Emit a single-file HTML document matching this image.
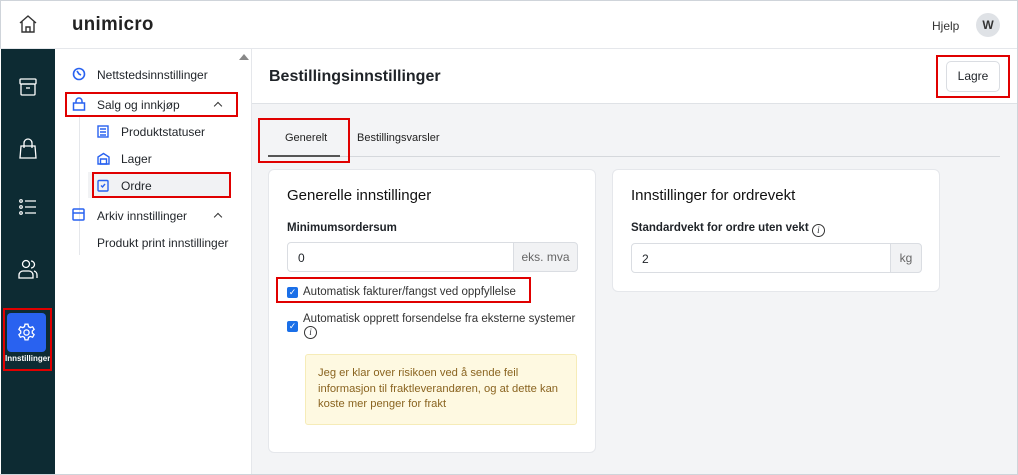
<!DOCTYPE html>
<html><head><meta charset="utf-8"><style>
*{box-sizing:border-box;margin:0;padding:0}
body{width:1018px;height:475px;overflow:hidden;font-family:"Liberation Sans",sans-serif;background:#fff;position:relative;color:#1f2328}
.abs{position:absolute}
.red{position:absolute;border:2px solid #e00000}
.top{left:0;top:0;width:1018px;height:49px;border:1px solid #cfd4da;border-bottom:1px solid #e5e7eb;background:#fff}
.rail{left:1px;top:49px;width:54px;height:425px;background:#0d2b33}
.side{left:55px;top:49px;width:197px;height:425px;background:#fff;border-right:1px solid #e5e7eb}
.main{left:252px;top:49px;width:765px;height:425px;background:#f3f4f6}
.hdr{left:252px;top:49px;width:765px;height:55px;background:#fff;border-bottom:1px solid #dfe2e6}
.si{position:absolute;font-size:12px;color:#1f2328}
.card{position:absolute;background:#fff;border:1px solid #e5e7eb;border-radius:6px}
.h{font-size:15px;color:#111}
.lbl{font-size:11.5px;font-weight:bold}
.inp{position:absolute;height:30px;border:1px solid #dadde2;border-radius:4px;background:#fff;font-size:12px}
.cb{position:absolute;width:11px;height:11px;background:#1a6fe8;border-radius:2px;color:#fff;font-size:9px;line-height:11px;text-align:center}
.chev{position:absolute;width:6px;height:6px;border-left:1.5px solid #333;border-top:1.5px solid #333;transform:rotate(45deg)}
.info{display:inline-block;width:13px;height:13px;border:1px solid #333;border-radius:50%;font-size:9px;text-align:center;line-height:11px;font-style:italic;font-family:'Liberation Serif',serif;font-weight:normal;vertical-align:-2px}
</style></head><body>
<div class="abs top"></div>
<svg class="abs" style="left:18px;top:14px" width="20" height="20" viewBox="0 0 20 20" fill="none" stroke="#333" stroke-width="1.4"><path d="M2 9L10 2l8 7M4 7.5V18h12V7.5M8 18v-5h4v5"/></svg>
<div class="abs" style="left:72px;top:14px;font-size:19px;color:#222;letter-spacing:0.4px;font-weight:bold;transform:scaleX(0.98);transform-origin:left">unimicro</div>
<div class="abs" style="left:932px;top:19px;font-size:12px;color:#333">Hjelp</div>
<div class="abs" style="left:976px;top:13px;width:24px;height:24px;border-radius:50%;background:#dfe2e6;font-size:12px;font-weight:bold;text-align:center;line-height:24px;color:#333">W</div>
<div class="abs rail"></div>
<svg class="abs" style="left:18px;top:77px" width="20" height="20" viewBox="0 0 20 20" fill="none" stroke="#fff" stroke-width="1.3"><rect x="2" y="2" width="16" height="5" rx="1"/><rect x="3" y="7" width="14" height="11" rx="1"/><path d="M8 11h4"/></svg>
<svg class="abs" style="left:18px;top:138px" width="20" height="22" viewBox="0 0 20 22" fill="none" stroke="#fff" stroke-width="1.3"><path d="M3 8h14l1 12H2z"/><path d="M6 10V5a4 4 0 018 0v5"/></svg>
<svg class="abs" style="left:18px;top:197px" width="20" height="20" viewBox="0 0 20 20" fill="none" stroke="#fff" stroke-width="1.2"><circle cx="3" cy="4" r="1.3"/><circle cx="3" cy="10" r="1.3"/><circle cx="3" cy="16" r="1.3"/><path d="M7 4h11M7 10h11M7 16h11"/></svg>
<svg class="abs" style="left:18px;top:259px" width="20" height="20" viewBox="0 0 20 20" fill="none" stroke="#fff" stroke-width="1.3"><circle cx="8" cy="5" r="3.5"/><path d="M1 19v-3a4 4 0 014-4h6a4 4 0 014 4v3zM13 2a3.5 3.5 0 010 7M16 12a4 4 0 013 4v3"/></svg>
<div class="abs" style="left:7px;top:313px;width:39px;height:39px;background:#2962f0;border-radius:4px"></div>
<svg class="abs" style="left:16px;top:322px" width="21" height="21" viewBox="0 0 24 24" fill="none" stroke="#fff" stroke-width="1.5"><circle cx="12" cy="12" r="3"/><path d="M10.3 2.5h3.4l.6 2.8 2 1.1 2.7-.9 1.7 2.9-2.1 1.9v2.3l2.1 1.9-1.7 2.9-2.7-.9-2 1.1-.6 2.8h-3.4l-.6-2.8-2-1.1-2.7.9-1.7-2.9 2.1-1.9v-2.3L3.3 8.4 5 5.5l2.7.9 2-1.1z"/></svg>
<div class="abs" style="left:5px;top:354px;font-size:8px;font-weight:bold;color:#fff">Innstillinger</div>
<div class="red" style="left:3px;top:308px;width:49px;height:63px"></div>
<div class="abs side"></div>
<div class="abs" style="left:239px;top:54px;width:0;height:0;border-left:5px solid transparent;border-right:5px solid transparent;border-bottom:6px solid #888"></div>
<div class="abs" style="left:79px;top:115px;width:1px;height:140px;background:#e5e7eb"></div>
<svg class="abs" style="left:72px;top:67px" width="14" height="14" viewBox="0 0 14 14" fill="none" stroke="#2962f0" stroke-width="1.6"><circle cx="7" cy="7" r="5.5"/><path d="M5 4l2 3 2 1"/></svg>
<div class="si" style="left:97px;top:68px">Nettstedsinnstillinger</div>
<svg class="abs" style="left:72px;top:97px" width="14" height="14" viewBox="0 0 14 14" fill="none" stroke="#2962f0" stroke-width="1.5"><path d="M1.5 6h11v7h-11z"/><path d="M4 6V4a3 3 0 016 0v2"/></svg>
<div class="si" style="left:97px;top:98px">Salg og innkjøp</div>
<div class="chev" style="left:215px;top:103px"></div>
<div class="red" style="left:65px;top:92px;width:173px;height:25px"></div>
<svg class="abs" style="left:97px;top:125px" width="12" height="13" viewBox="0 0 12 13" fill="none" stroke="#2962f0" stroke-width="1.4"><rect x="1" y="1" width="10" height="11"/><path d="M3 4h6M3 7h6M3 10h6"/></svg>
<div class="si" style="left:121px;top:125px">Produktstatuser</div>
<svg class="abs" style="left:97px;top:152px" width="13" height="13" viewBox="0 0 13 13" fill="none" stroke="#2962f0" stroke-width="1.4"><path d="M1 5l5.5-3.5L12 5v7H1z"/><path d="M3.5 7h6v5h-6z"/></svg>
<div class="si" style="left:121px;top:152px">Lager</div>
<div class="abs" style="left:88px;top:172px;width:143px;height:26px;background:#f1f2f4"></div>
<svg class="abs" style="left:97px;top:179px" width="12" height="13" viewBox="0 0 12 13" fill="none" stroke="#2962f0" stroke-width="1.4"><rect x="1" y="1.5" width="10" height="10.5" rx="1"/><path d="M4 6.5l1.5 1.5L8 5"/></svg>
<div class="si" style="left:121px;top:179px">Ordre</div>
<div class="red" style="left:92px;top:172px;width:139px;height:26px"></div>
<svg class="abs" style="left:72px;top:208px" width="13" height="13" viewBox="0 0 13 13" fill="none" stroke="#2962f0" stroke-width="1.5"><rect x="1" y="1" width="11" height="11" rx="1"/><path d="M1 5h11"/></svg>
<div class="si" style="left:97px;top:209px">Arkiv innstillinger</div>
<div class="chev" style="left:215px;top:214px"></div>
<div class="si" style="left:97px;top:236px">Produkt print innstillinger</div>
<div class="abs main"></div>
<div class="abs hdr"></div>
<div class="abs" style="left:269px;top:68px;font-size:16px;font-weight:bold;color:#1f2328">Bestillingsinnstillinger</div>
<div class="abs" style="left:946px;top:61px;width:54px;height:31px;border:1px solid #dadde2;border-radius:5px;background:#fff;font-size:12px;text-align:center;line-height:29px">Lagre</div>
<div class="red" style="left:936px;top:55px;width:74px;height:43px"></div>
<div class="abs" style="left:268px;top:156px;width:732px;height:1px;background:#d5d8dc"></div>
<div class="abs" style="left:268px;top:155px;width:72px;height:2px;background:#555"></div>
<div class="abs" style="left:285px;top:132px;font-size:11px;color:#222">Generelt</div>
<div class="abs" style="left:357px;top:132px;font-size:11px;color:#222">Bestillingsvarsler</div>
<div class="red" style="left:258px;top:118px;width:92px;height:45px"></div>
<div class="card" style="left:268px;top:169px;width:328px;height:284px"></div>
<div class="abs h" style="left:287px;top:187px">Generelle innstillinger</div>
<div class="abs lbl" style="left:287px;top:222px">Minimumsordersum</div>
<div class="inp" style="left:287px;top:242px;width:290px;"><div class="abs" style="left:10px;top:8px">0</div><div class="abs" style="left:225px;top:-1px;width:65px;height:30px;background:#f1f2f4;border:1px solid #dadde2;border-radius:0 4px 4px 0;color:#666;text-align:center;line-height:28px">eks. mva</div></div>
<div class="cb" style="left:287px;top:287px">✓</div>
<div class="abs" style="left:303px;top:286px;font-size:11.5px;color:#333">Automatisk fakturer/fangst ved oppfyllelse</div>
<div class="red" style="left:276px;top:277px;width:255px;height:26px"></div>
<div class="cb" style="left:287px;top:321px">✓</div>
<div class="abs" style="left:303px;top:313px;font-size:11.5px;color:#333">Automatisk opprett forsendelse fra eksterne systemer</div>
<div class="abs" style="left:304px;top:326px;line-height:13px"><span class="info" style="vertical-align:top">i</span></div>
<div class="abs" style="left:305px;top:354px;width:272px;height:71px;background:#fef9e1;border:1px solid #f6ecb8;border-radius:3px;padding:11px 8px 11px 12px;font-size:11.2px;line-height:15.5px;color:#8a6420">Jeg er klar over risikoen ved å sende feil informasjon til fraktleverandøren, og at dette kan koste mer penger for frakt</div>
<div class="card" style="left:612px;top:169px;width:328px;height:123px"></div>
<div class="abs h" style="left:631px;top:187px">Innstillinger for ordrevekt</div>
<div class="abs lbl" style="left:631px;top:222px;white-space:nowrap">Standardvekt for ordre uten vekt <span class="info">i</span></div>
<div class="inp" style="left:631px;top:243px;width:290px;"><div class="abs" style="left:10px;top:8px">2</div><div class="abs" style="left:258px;top:-1px;width:32px;height:30px;background:#f1f2f4;border:1px solid #dadde2;border-radius:0 4px 4px 0;color:#666;text-align:center;line-height:28px">kg</div></div>
<div class="abs" style="left:1017px;top:0;width:1px;height:475px;background:#cfd4da"></div>
<div class="abs" style="left:0;top:474px;width:1018px;height:1px;background:#cfd4da"></div>
</body></html>
